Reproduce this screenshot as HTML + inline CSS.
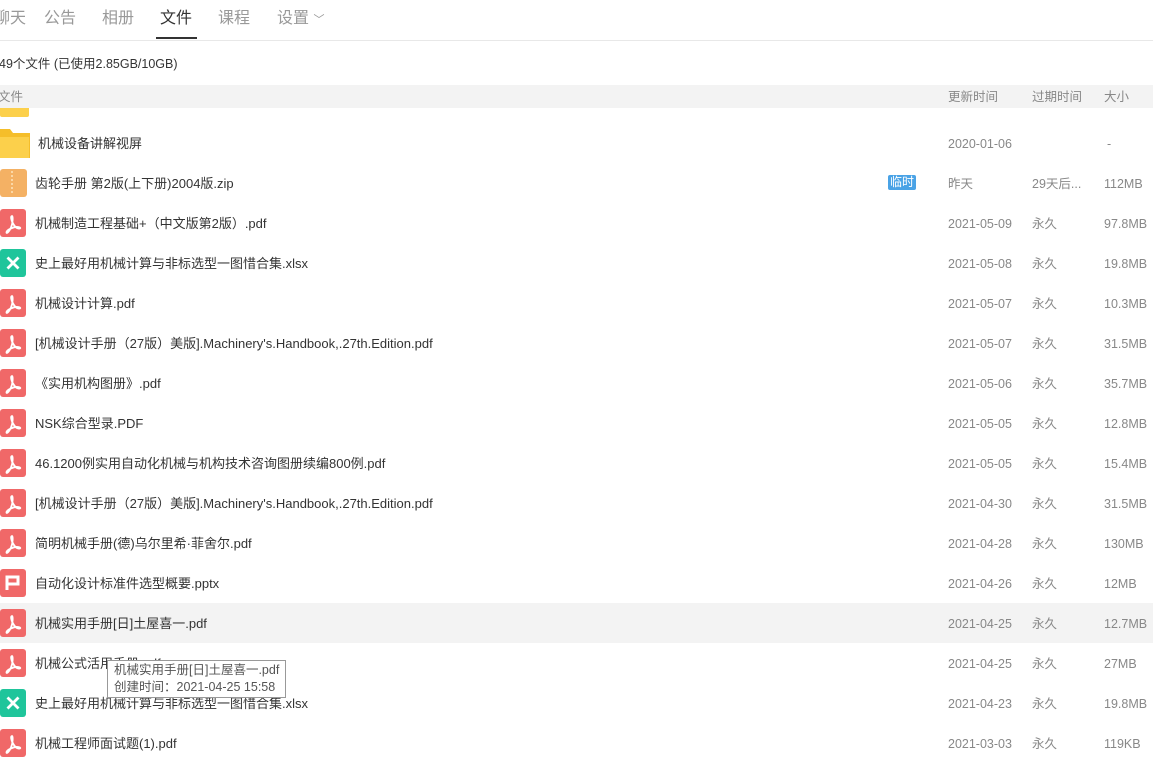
<!DOCTYPE html>
<html><head><meta charset="utf-8"><style>
*{margin:0;padding:0;box-sizing:border-box}
body{width:1153px;height:761px;overflow:hidden;background:#fff;font-family:"Liberation Sans","Noto Sans CJK SC",sans-serif;position:relative;color:#333}
.nav{position:absolute;top:0;left:0;width:1153px;height:41px;border-bottom:1px solid #e8e8e8}
.nav span{position:absolute;top:8px;font-size:16px;color:#999;line-height:22px}
.nav .on{color:#333}
.ul{position:absolute;left:156px;top:37px;width:41px;height:2px;background:#333}
.info{position:absolute;left:-1px;top:55px;font-size:12.5px;color:#333;line-height:18px}
.hdr{position:absolute;top:85px;left:0;width:1153px;height:23px;background:#f3f3f3;font-size:12.5px;color:#888}
.hdr span{position:absolute;top:3px;line-height:18px}
.row{position:absolute;left:0;width:1153px;height:40px;font-size:12.5px;line-height:18px}
.row.hov{background:#f3f3f3}
.row .n{position:absolute;left:35px;top:12px;color:#333;white-space:nowrap;font-size:13px}
.row .d{position:absolute;left:948px;top:12px;color:#888}
.row .e{position:absolute;left:1032px;top:12px;color:#888}
.row .s{position:absolute;left:1104px;top:12px;color:#888}
.ic{position:absolute;left:0;top:6px;width:26px;height:28px;border-radius:3px}
.pdf{background:#f06868}
.xls{background:#1fc59b}
.ppt{background:#f06868}
.ic svg{position:absolute;left:0;top:0}
.tag{position:absolute;left:888px;top:12px;background:#4aa3e6;color:#fff;font-size:12px;padding:0 2px;line-height:15px;border-radius:2px}
.tip{position:absolute;left:107px;top:660px;border:1px solid #999;background:#fff;font-size:12.5px;color:#555;padding:1px 6px;line-height:17px;white-space:nowrap}
</style></head><body>
<div class="nav">
<span style="left:-6px">聊天</span><span style="left:44px">公告</span><span style="left:102px">相册</span><span class="on" style="left:160px">文件</span><span style="left:218px">课程</span><span style="left:277px">设置 <small style="font-size:11px">﹀</small></span>
<div class="ul"></div></div>
<div class="info">49个文件 (已使用2.85GB/10GB)</div>
<div class="hdr"><span style="left:-2px">文件</span><span style="left:948px">更新时间</span><span style="left:1032px">过期时间</span><span style="left:1104px">大小</span></div>
<div style="position:absolute;left:0;top:108px;width:29px;height:9px;background:#fcd04b;border-radius:0 0 2px 2px"></div>
<div class="row" style="top:123px">
<svg style="position:absolute;left:0;top:5px" width="30" height="30"><path d="M0 1h10l3 4h17v25H0z" fill="#f5be2a"/><rect x="0" y="9" width="29" height="21" fill="#fcd04b"/></svg>
<div class="n" style="left:38px">机械设备讲解视屏</div><div class="d">2020-01-06</div><div class="s" style="left:1107px">-</div></div>
<div class="row" style="top:163px">
<div class="ic" style="background:#f4b164;width:27px"><svg width="27" height="28"><path d="M12 2v22" stroke="#fbd8a6" stroke-width="2" stroke-dasharray="2 2"/></svg></div>
<div class="n">齿轮手册 第2版(上下册)2004版.zip</div><div class="tag">临时</div><div class="d">昨天</div><div class="e">29天后...</div><div class="s">112MB</div></div>
<div id="rows"></div>
<div class="tip">机械实用手册[日]土屋喜一.pdf<br>创建时间：2021-04-25 15:58</div>
<script>
var P='<svg width="26" height="28" viewBox="0 0 26 28"><path d="M12 7c-1.5 0-1 4 1 7.5s4 5.5 6.5 5-1.5-2.5-6-1-7 3.5-7 5 2.5-.5 4.5-5 2-11.5 1-11.5z" fill="none" stroke="#fff" stroke-width="1.8"/></svg>';
var X='<svg width="26" height="28"><path d="M7.5 8.5l11 11M18.5 8.5l-11 11" stroke="#fff" stroke-width="2.8"/></svg>';
var PP='<svg width="26" height="28"><path d="M7 21V8h11v7H8" fill="none" stroke="#fff" stroke-width="3"/></svg>';
var d=[
['pdf','机械制造工程基础+（中文版第2版）.pdf','2021-05-09','97.8MB'],
['xls','史上最好用机械计算与非标选型一图惜合集.xlsx','2021-05-08','19.8MB'],
['pdf','机械设计计算.pdf','2021-05-07','10.3MB'],
['pdf','[机械设计手册（27版）美版].Machinery\'s.Handbook,.27th.Edition.pdf','2021-05-07','31.5MB'],
['pdf','《实用机构图册》.pdf','2021-05-06','35.7MB'],
['pdf','NSK综合型录.PDF','2021-05-05','12.8MB'],
['pdf','46.1200例实用自动化机械与机构技术咨询图册续编800例.pdf','2021-05-05','15.4MB'],
['pdf','[机械设计手册（27版）美版].Machinery\'s.Handbook,.27th.Edition.pdf','2021-04-30','31.5MB'],
['pdf','简明机械手册(德)乌尔里希·菲舍尔.pdf','2021-04-28','130MB'],
['ppt','自动化设计标准件选型概要.pptx','2021-04-26','12MB'],
['pdf','机械实用手册[日]土屋喜一.pdf','2021-04-25','12.7MB'],
['pdf','机械公式活用手册.pdf','2021-04-25','27MB'],
['xls','史上最好用机械计算与非标选型一图惜合集.xlsx','2021-04-23','19.8MB'],
['pdf','机械工程师面试题(1).pdf','2021-03-03','119KB']];
var h='';d.forEach(function(r,i){var ic=r[0]=='pdf'?P:r[0]=='xls'?X:PP;
h+='<div class="row'+(i==10?' hov':'')+'" style="top:'+(203+i*40)+'px"><div class="ic '+r[0]+'">'+ic+'</div><div class="n">'+r[1]+'</div><div class="d">'+r[2]+'</div><div class="e">永久</div><div class="s">'+r[3]+'</div></div>';});
document.getElementById('rows').innerHTML=h;
</script>
</body></html>
